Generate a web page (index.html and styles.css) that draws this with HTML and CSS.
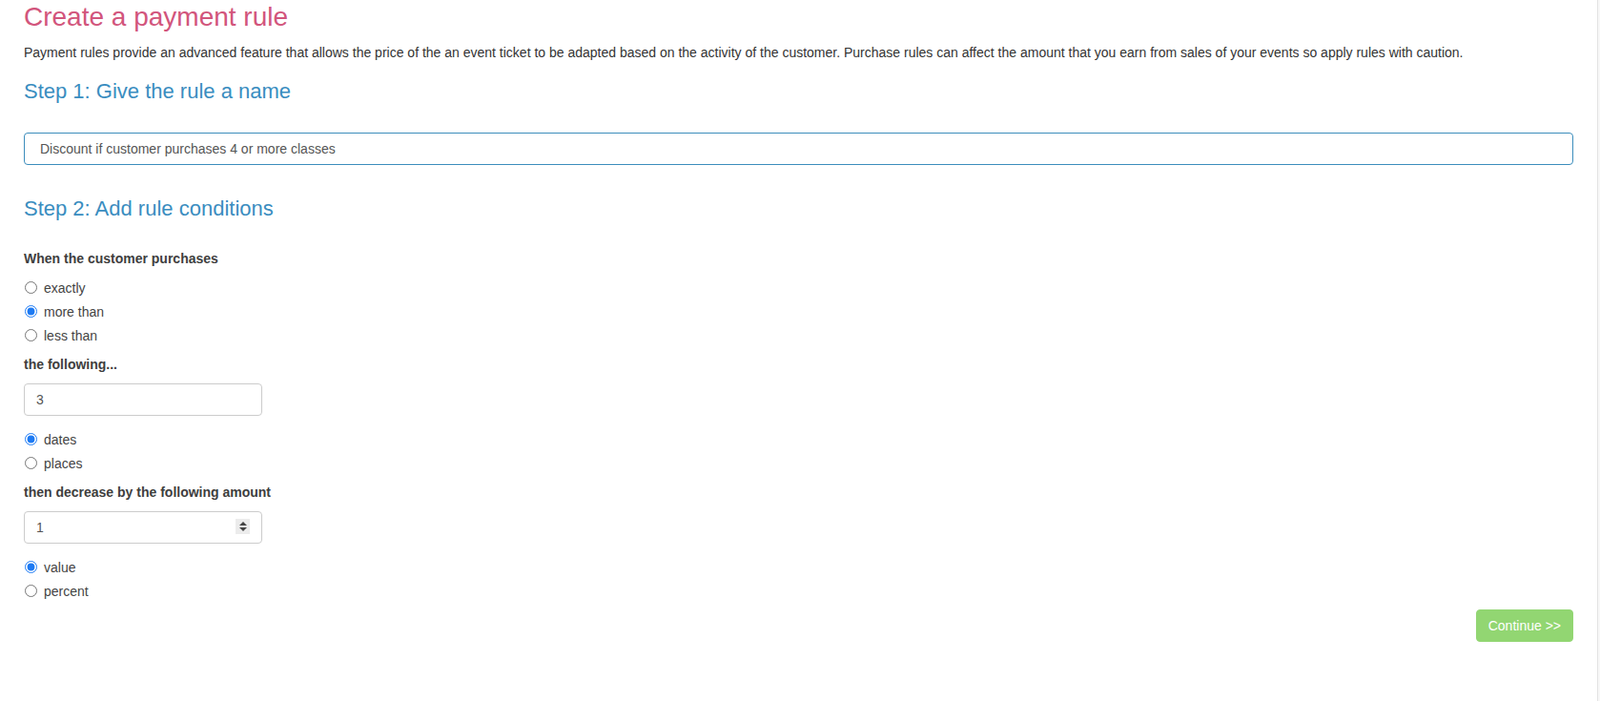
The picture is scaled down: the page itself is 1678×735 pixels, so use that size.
FILE: index.html
```html
<!DOCTYPE html>
<html lang="en">
<head>
    <meta charset="UTF-8">
    <meta name="viewport" content="width=device-width, initial-scale=1.0">
    <title>Create a payment rule</title>
    <link rel="stylesheet" href="styles.css">
</head>
<body>
    <div class="page">
        <h1 class="page-title">Create a payment rule</h1>
        <p class="intro">Payment rules provide an advanced feature that allows the price of the an event ticket to be adapted based on the activity of the customer. Purchase rules can affect the amount that you earn from sales of your events so apply rules with caution.</p>

        <h3 class="step-title">Step 1: Give the rule a name</h3>
        <input class="name-input" type="text" value="Discount if customer purchases 4 or more classes">

        <h3 class="step-title step-title-second">Step 2: Add rule conditions</h3>

        <div class="field-label field-label-first">When the customer purchases</div>
        <div class="radio-list">
            <label class="radio-row"><input type="radio" name="compare"> exactly</label>
            <label class="radio-row"><input type="radio" name="compare" checked> more than</label>
            <label class="radio-row"><input type="radio" name="compare"> less than</label>
        </div>

        <div class="field-label">the following...</div>
        <input class="small-input" type="text" value="3">
        <div class="radio-list">
            <label class="radio-row"><input type="radio" name="unit" checked> dates</label>
            <label class="radio-row"><input type="radio" name="unit"> places</label>
        </div>

        <div class="field-label">then decrease by the following amount</div>
        <div class="number-wrap">
            <input class="small-input" type="number" value="1">
            <span class="spinner"><span class="spin-up"></span><span class="spin-down"></span></span>
        </div>
        <div class="radio-list">
            <label class="radio-row"><input type="radio" name="kind" checked> value</label>
            <label class="radio-row"><input type="radio" name="kind"> percent</label>
        </div>

        <div class="actions">
            <button class="btn-continue">Continue &gt;&gt;</button>
        </div>
    </div>
</body>
</html>
```

FILE: styles.css
```css
        html {
            background: #f7f7f7;
        }

        body {
            margin: 0 2px 0 0;
            background: #fff;
            border-right: 1px solid #e3e3e3;
            min-height: 100vh;
            color: #333;
            font-family: "Liberation Sans", Arial, sans-serif;
            font-size: 14px;
            line-height: 20px;
        }

        .page {
            padding: 2px 25px 40px 25px;
        }

        .page-title {
            margin: 0;
            font-size: 28px;
            line-height: 32px;
            font-weight: normal;
            color: #d2557c;
        }

        .intro {
            margin: 11px 0 0 0;
        }

        .step-title {
            margin: 19px 0 0 0;
            font-size: 22px;
            line-height: 24px;
            font-weight: normal;
            color: #3a8dc0;
        }

        .step-title-second {
            margin-top: 34px;
        }

        .name-input {
            display: block;
            width: 100%;
            box-sizing: border-box;
            height: 34px;
            margin-top: 31px;
            padding: 0 16px;
            border: 1px solid #3c8dbc;
            border-radius: 4px;
            font-family: inherit;
            font-size: 14px;
            color: #555;
            outline: none;
        }

        .field-label {
            margin-top: 8px;
            font-weight: bold;
            color: #3e3e3e;
        }

        .field-label-first {
            margin-top: 30px;
        }

        .radio-list {
            margin-top: 8px;
        }

        .small-input + .radio-list,
        .number-wrap + .radio-list {
            margin-top: 12px;
        }

        .radio-row {
            display: flex;
            align-items: center;
            height: 25px;
            color: #444;
            cursor: pointer;
        }

        .radio-row input {
            width: 13px;
            height: 13px;
            margin: 0 7px 0 1px;
            accent-color: #1d7af3;
        }

        .small-input {
            display: block;
            width: 250px;
            box-sizing: border-box;
            height: 34px;
            margin-top: 10px;
            padding: 0 12px;
            border: 1px solid #ccc;
            border-radius: 4px;
            font-family: inherit;
            font-size: 14px;
            color: #555;
            outline: none;
            -moz-appearance: textfield;
        }

        .small-input::-webkit-inner-spin-button,
        .small-input::-webkit-outer-spin-button {
            -webkit-appearance: none;
            margin: 0;
        }

        .number-wrap {
            position: relative;
            width: 250px;
        }

        .spinner {
            position: absolute;
            left: 222px;
            top: 8px;
            width: 15px;
            height: 16px;
            background: #ececec;
            display: flex;
            flex-direction: column;
            align-items: center;
            justify-content: center;
            gap: 2px;
        }

        .spin-up {
            width: 0;
            height: 0;
            border-left: 4px solid transparent;
            border-right: 4px solid transparent;
            border-bottom: 4px solid #444;
        }

        .spin-down {
            width: 0;
            height: 0;
            border-left: 4px solid transparent;
            border-right: 4px solid transparent;
            border-top: 4px solid #444;
        }

        .actions {
            display: flex;
            justify-content: flex-end;
            margin-top: 7px;
        }

        .btn-continue {
            height: 34px;
            padding: 0 12px;
            border: 1px solid #92d672;
            border-radius: 4px;
            background: #92d672;
            color: #fff;
            font-family: inherit;
            font-size: 14px;
            cursor: pointer;
        }
```
